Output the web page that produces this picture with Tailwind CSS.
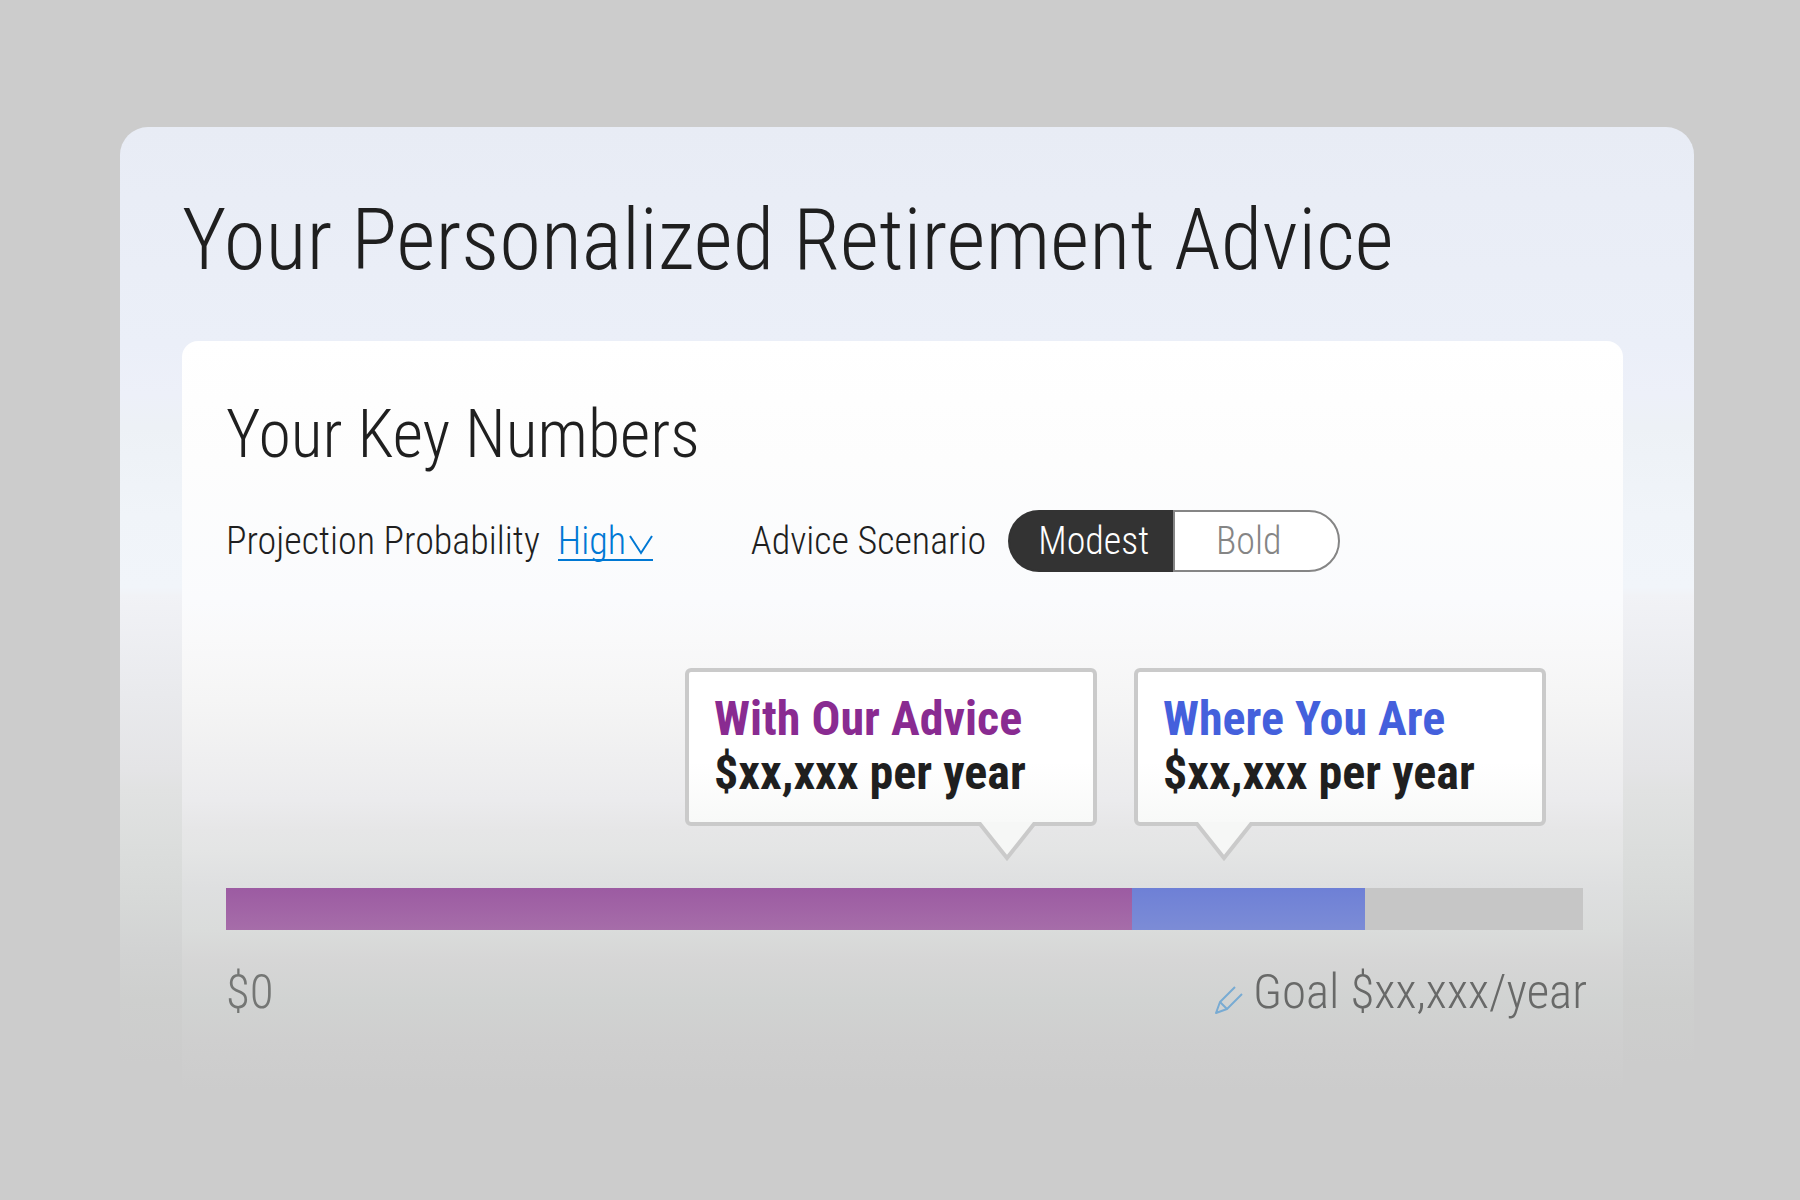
<!DOCTYPE html>
<html lang="en">

<head>
  <meta charset="UTF-8" />
  <meta name="viewport" content="width=device-width, initial-scale=1.0" />
  <title>Your Personalized Retirement Advice</title>
  <script src="https://cdn.jsdelivr.net/npm/@tailwindcss/browser@4"></script>
</head>

<body class="min-h-screen bg-[#cccccc] font-['Roboto_Condensed','Open_Sans_Condensed','Liberation_Sans',sans-serif] text-[#1f1f1f]">

  <!-- outer panel -->
  <main class="mt-[127px] mb-24 ml-[120px] mr-[106px] pt-[65px] pl-[62px] pr-[71px] rounded-t-[28px] bg-[linear-gradient(180deg,#e8ecf5_0,#ebeff8_216px,#edf0f9_267px,#edf1f6_299px,#f0f4f9_388px,#f1f5fa_460px,#f1f2f6_469px,#e9eaed_567px,#e4e4e6_643px,#e1e2e2_663px,#dbdddc_726px,#d7d9d8_771px,#d2d3d3_822px,#cecfce_873px,#cccccc_937px)]">
    <h1 class="text-[85px] leading-[96px] font-light">Your Personalized Retirement Advice</h1>

    <!-- key numbers card -->
    <section class="mt-[53px] pt-[54px] pb-20 pl-11 pr-10 rounded-t-2xl bg-[linear-gradient(180deg,#ffffff_0,#fdfdfd_119px,#fafbfd_259px,#f9f9fa_299px,#f5f5f5_359px,#efeff0_419px,#ebebed_459px,#e6e6e7_489px,#e4e5e5_509px,#dedfe0_547px,#dadcdb_589px,#d6d6d6_619px,#d1d3d2_659px,#cfcfcf_699px,#cccccc_749px)]">
      <h2 class="text-[66px] leading-20 font-light">Your Key Numbers</h2>

      <!-- controls -->
      <div class="flex items-center mt-[35px] text-[38px] leading-[62px] font-light">
        <label for="probability">Projection Probability</label>
        <div class="relative flex items-center ml-[18px] text-[#0078d4]">
          <select id="probability" class="appearance-none w-[95px] h-[62px] bg-transparent cursor-pointer focus:outline-none">
            <option>High</option>
            <option>Medium</option>
            <option>Low</option>
          </select>
          <svg class="absolute right-0 top-[25px] w-6 h-5 pointer-events-none" viewBox="0 0 24 20" fill="none" stroke="currentColor" stroke-width="2">
            <path d="M1 1 L12 18 L23 1" />
          </svg>
          <span class="absolute inset-x-0 bottom-[11px] h-0.5 bg-[#0078d4]"></span>
        </div>

        <fieldset class="flex items-center ml-[98px]">
          <legend class="float-left">Advice Scenario</legend>
          <div class="flex ml-[22px] text-center">
            <label class="w-[165px] h-[62px] pl-1 rounded-l-full border-2 border-r-0 border-[#333333] bg-[#333333] text-white leading-[58px] cursor-pointer">
              <input type="radio" name="scenario" value="modest" class="sr-only" checked>Modest
            </label>
            <label class="w-[167px] h-[62px] pr-4 rounded-r-full border-2 border-[#858585] bg-white text-[#858585] leading-[58px] cursor-pointer">
              <input type="radio" name="scenario" value="bold" class="sr-only">Bold
            </label>
          </div>
        </fieldset>
      </div>

      <!-- callouts over the bar -->
      <div class="flex justify-end gap-[37px] mt-24 pr-[37px] text-[48px] leading-[54px] font-bold">
        <div class="relative w-[412px] pt-5 pb-[22px] px-[25px] rounded-md border-4 border-[#cacaca] bg-linear-to-b from-white from-60% to-[#f8f9f8]">
          <p class="text-[#892b91]">With Our Advice</p>
          <p>$xx,xxx per year</p>
          <svg class="absolute right-14 top-[150px] w-[60px] h-10" viewBox="0 0 60 40" fill="none">
            <path d="M1 0 H59 L30 37 Z" fill="#f6f7f6" />
            <path d="M0 2 H3 L30 36 L57 2 H60" stroke="#cacaca" stroke-width="4" />
          </svg>
        </div>
        <div class="relative w-[412px] pt-5 pb-[22px] px-[25px] rounded-md border-4 border-[#cacaca] bg-linear-to-b from-white from-60% to-[#f8f9f8]">
          <p class="text-[#4460dc]">Where You Are</p>
          <p>$xx,xxx per year</p>
          <svg class="absolute left-14 top-[150px] w-[60px] h-10" viewBox="0 0 60 40" fill="none">
            <path d="M1 0 H59 L30 37 Z" fill="#f6f7f6" />
            <path d="M0 2 H3 L30 36 L57 2 H60" stroke="#cacaca" stroke-width="4" />
          </svg>
        </div>
      </div>

      <!-- progress bar -->
      <div class="flex h-[42px] mt-[62px] bg-[#c6c6c6]" role="img" aria-label="Progress towards goal">
        <div class="bg-linear-to-b from-[#9c5ba2] to-[#a66da9]" style="width: 66.8%"></div>
        <div class="bg-linear-to-b from-[#6e80d6] to-[#7c8cd6]" style="width: 17.1%"></div>
      </div>

      <!-- scale labels -->
      <div class="flex justify-between mt-8 -mr-1 text-[49px] leading-[60px] font-light">
        <span class="text-[#747674]">$0</span>
        <div class="flex items-center">
          <button type="button" aria-label="Edit goal" class="mt-4 mr-2.5 cursor-pointer">
            <svg class="w-7 h-7" viewBox="0 0 28 28" fill="none" stroke="#78abd3" stroke-width="2" stroke-linejoin="round">
              <path d="M20 1 L5 16 L1 27 L12 23 L27 8" />
              <path d="M5 16 L12 23" />
            </svg>
          </button>
          <span class="text-[#686968]">Goal $xx,xxx/year</span>
        </div>
      </div>
    </section>
  </main>

</body>

</html>
